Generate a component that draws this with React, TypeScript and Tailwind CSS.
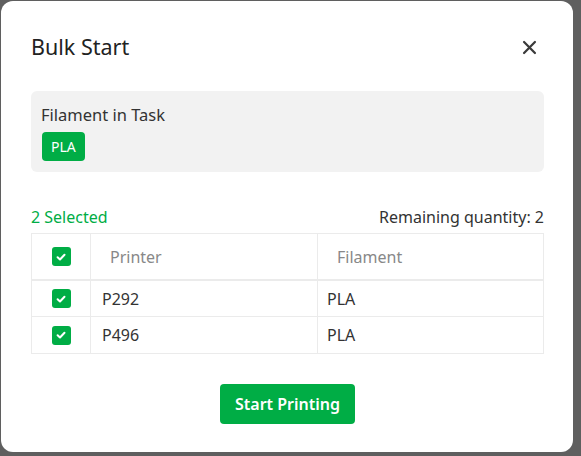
import React from "react";

const Check = ({ size = 19 }: { size?: number }) => (
  <span
    className="inline-flex items-center justify-center rounded-[3px] bg-[#00ad45]"
    style={{ width: size, height: size }}
  >
    <svg width="12" height="12" viewBox="0 0 12 12" fill="none">
      <path d="M2.6 6.2 L5 8.5 L9.5 3.7" stroke="white" strokeWidth="2" strokeLinecap="round" strokeLinejoin="round" />
    </svg>
  </span>
);

export default function App() {
  const rows = [
    { p: "P292", f: "PLA" },
    { p: "P496", f: "PLA" },
  ];
  return (
    <div
      className="w-[581px] h-[456px] bg-[#5f5f5f] pl-[1px] pt-[1px] overflow-hidden"
      style={{ fontFamily: '"Noto Sans", "Open Sans", sans-serif' }}
    >
      <div className="w-[572px] h-[451px] bg-white rounded-[12px] pl-[30px] pr-[29px] flex flex-col">
        <div className="flex items-center justify-between h-[90px] pt-[2px]">
          <div className="text-[21.5px] leading-[28px] text-[#222]">Bulk Start</div>
          <svg width="15" height="15" viewBox="0 0 16 16" className="mr-[7px]">
            <path d="M2.2 2.2 L13.8 13.8 M13.8 2.2 L2.2 13.8" stroke="#3a3a3a" strokeWidth="2.4" strokeLinecap="round" />
          </svg>
        </div>
        <div className="bg-[#f2f2f2] rounded-[6px] pt-[12px] pb-[11px] px-[10px] h-[81px]">
          <div className="text-[16.5px] leading-[24px] text-[#333]">Filament in Task</div>
          <div className="mt-[5px] ml-[1px] inline-flex items-center h-[29px] px-[9px] rounded-[4px] bg-[#00ad45] text-white text-[14px]">
            PLA
          </div>
        </div>
        <div className="flex justify-between items-center mt-[33px] h-[24px] text-[16px]">
          <span className="text-[#00ad45]">2 Selected</span>
          <span className="text-[#333]">Remaining quantity: 2</span>
        </div>
        <div className="mt-[4px] border border-[#ebebeb] text-[16px]">
          <div className="flex h-[47px] border-b-2 border-[#ebebeb]">
            <div className="w-[59px] flex items-center justify-center border-r border-[#ebebeb]">
              <Check />
            </div>
            <div className="w-[227px] flex items-center pl-[19px] border-r border-[#ebebeb] text-[#888]">Printer</div>
            <div className="flex-1 flex items-center pl-[19px] text-[#888]">Filament</div>
          </div>
          {rows.map((r, i) => (
            <div key={r.p} className={`flex h-[36px] ${i === 0 ? "border-b border-[#ebebeb]" : ""}`}>
              <div className="w-[59px] flex items-center justify-center border-r border-[#ebebeb]">
                <Check />
              </div>
              <div className="w-[227px] flex items-center pl-[11px] border-r border-[#ebebeb] text-[#333]">{r.p}</div>
              <div className="flex-1 flex items-center pl-[9px] text-[#333]">{r.f}</div>
            </div>
          ))}
        </div>
        <div className="flex justify-center mt-[30px]">
          <button className="h-[40px] px-[15px] rounded-[4px] bg-[#00ad45] text-white text-[16px] font-semibold">
            Start Printing
          </button>
        </div>
      </div>
    </div>
  );
}
